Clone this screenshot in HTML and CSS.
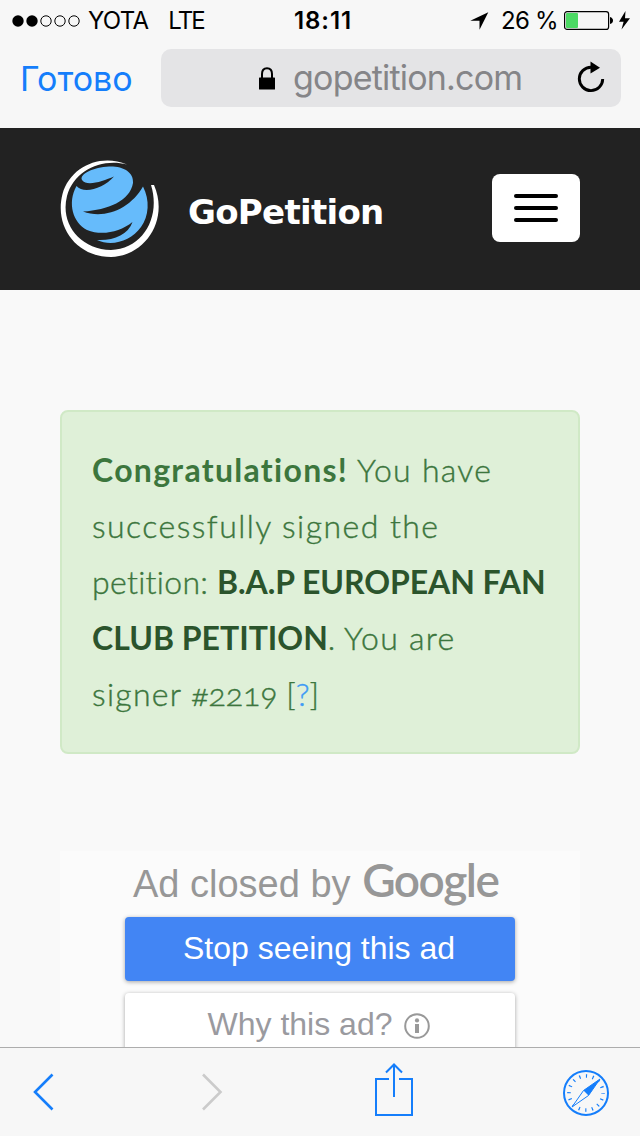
FILE: index.html
```
<!DOCTYPE html>
<html lang="ru">
<head>
  <meta charset="UTF-8" />
  <meta name="viewport" content="width=device-width, initial-scale=1.0"/>
  <title>GoPetition</title>
  <link rel="stylesheet" href="styles.css">
</head>
<body>
  <div class="status-bar">
    <div class="status-left">
      <svg class="signal" width="68" height="12" viewBox="0 0 68 12">
        <circle cx="6" cy="6" r="5.7"/>
        <circle cx="20" cy="6" r="5.7"/>
        <g fill="none" stroke="#000" stroke-width="1">
          <circle cx="34" cy="6" r="5.2"/>
          <circle cx="48" cy="6" r="5.2"/>
          <circle cx="62" cy="6" r="5.2"/>
        </g>
      </svg>
      <span class="carrier">YOTA</span>
      <span class="network">LTE</span>
    </div>
    <span class="time">18:11</span>
    <div class="status-right">
      <svg width="19" height="18" viewBox="0 0 19 18"><path d="M18.3 0.2L0.3 8.7H9.5V17.8Z"/></svg>
      <span class="percent">26 %</span>
      <svg class="battery" width="67" height="20" viewBox="0 0 67 20">
        <rect x="0.6" y="1.6" width="44" height="17.8" rx="2.5" fill="none" stroke="#000" stroke-width="1.2"/>
        <rect x="2" y="3" width="12" height="15" rx="1" fill="#4cd964"/>
        <path d="M46 7Q49 8 49 10.5T46 14Z"/>
        <path d="M61.5 1L55 11.8H59.6L57.5 19.5L66 8.3H61Z"/>
      </svg>
    </div>
  </div>

  <div class="address-bar">
    <a class="done">Готово</a>
    <div class="url-field">
      <svg class="lock" width="16" height="23" viewBox="0 0 16 23">
        <path d="M3 12V7Q3 1.2 8 1.2T13 7V12" fill="none" stroke="#000" stroke-width="2"/>
        <rect x="0" y="10.5" width="16" height="12" rx="0.6"/>
      </svg>
      <span class="url">gopetition.com</span>
      <svg class="reload" width="28" height="32" viewBox="0 0 28 32">
        <path d="M14 6.2A11.7 11.7 0 1 0 25.7 18" fill="none" stroke="#000" stroke-width="2.9"/>
        <path d="M13.5 0.5L23 6.8L13.5 12.5Z"/>
      </svg>
    </div>
  </div>

  <header class="site-header">
    <div class="brand">
      <svg width="100" height="100" viewBox="0 0 100 100">
        <path d="M67 5.5C40-6 10 8 2.5 35C-6 68 17 98 51 98C86 97 109 60 94 26L91 26C101 58 83 90 51 91C19 90 0 64 7 37C14 12 41-1 67 5.5Z" fill="#fff"/>
        <path d="M22 21C19 15 34 8 49 7.5C63 7 74 13 73 24C70 42 48 51 23 52.5C45 61 71 49 83 27.5C90 41 89 57 81 68C71 82 52 88 37 81C53 82 68 76 72.5 63C60 73 42 77 27 71C13 64 7 44 16.5 27C24 36 44 29 54 17.5C43 22 27 28 22 21Z" fill="#66bbfb"/>
      </svg>
      <span class="brand-name">GoPetition</span>
    </div>
    <button class="menu-button" type="button">
      <span></span>
      <span></span>
      <span></span>
    </button>
  </header>

  <main>
    <div class="alert">
      <div class="wide"><strong>Congratulations!</strong> You have</div>
      <div class="wider">successfully signed the</div>
      <div class="petition"><span>petition:</span> <b>B.A.P EUROPEAN FAN</b></div>
      <div><b>CLUB PETITION</b>. <span class="wide">You are</span></div>
      <div><span class="wide">signer</span> #2219 [<a>?</a>]</div>
    </div>

    <div class="ad">
      <div class="ad-title">Ad closed by <span class="google">Google</span></div>
      <div class="ad-button primary">Stop seeing this ad</div>
      <div class="ad-button">Why this ad?
        <svg width="26" height="26" viewBox="0 0 26 26">
          <circle cx="13" cy="13" r="11.8" fill="none" stroke="#999" stroke-width="2"/>
          <circle cx="13" cy="7.4" r="2.1" fill="#999"/>
          <rect x="11" y="11" width="4" height="9" fill="#999"/>
        </svg>
      </div>
    </div>
  </main>

  <footer class="toolbar">
    <svg class="back" width="22" height="38" viewBox="0 0 22 38"><path d="M20.5 1.5L3 19L20.5 36.5" fill="none" stroke="#157efb" stroke-width="2.6"/></svg>
    <svg class="forward" width="22" height="38" viewBox="0 0 22 38"><path d="M2 1.5L19.5 19L2 36.5" fill="none" stroke="#cbcbcb" stroke-width="2.6"/></svg>
    <svg class="share" width="38" height="54" viewBox="0 0 38 54">
      <g fill="none" stroke="#157efb" stroke-width="2">
        <path d="M14 16H1V52H37V16H24"/>
        <path d="M19 34V2M11 9.5L19 1.5L27 9.5"/>
      </g>
    </svg>
    <svg class="compass" width="46" height="46" viewBox="0 0 46 46">
      <circle cx="23" cy="23" r="22" fill="none" stroke="#157efb" stroke-width="2"/>
      <circle cx="23" cy="23" r="17" fill="none" stroke="#157efb" stroke-width="3.6" stroke-dasharray="1.2 5.476" stroke-dashoffset="0.6"/>
      <path d="M37 9L20.5 20.5L9 37L25.5 25.5Z" fill="#f7f7f7" stroke="#157efb" stroke-width="1"/>
      <path d="M37 9L20.5 20.5L25.5 25.5Z" fill="#157efb"/>
    </svg>
  </footer>
</body>
</html>
```

FILE: styles.css
```
* {
  box-sizing: border-box;
}
body {
  margin: 0;
  height: 1136px;
  display: flex;
  flex-direction: column;
  overflow: hidden;
  background-color: #f9f9f9;
  font-family: Inter, "Liberation Sans", sans-serif;
}
svg {
  display: block;
  flex: none;
}
.status-bar {
  height: 40px;
  flex: none;
  display: grid;
  grid-template-columns: 1fr auto 1fr;
  align-items: center;
  padding: 1px 9px 0 12px;
  background-color: #f7f7f7;
  font-size: 24px;
  line-height: 40px;
  white-space: nowrap;
}
.status-left, .status-right {
  display: flex;
  align-items: center;
}
.status-right {
  justify-content: flex-end;
}
.battery {
  margin-bottom: 2px;
}
.carrier {
  margin-left: 8px;
  letter-spacing: -0.7px;
}
.network {
  margin-left: 20px;
  letter-spacing: -1.9px;
}
.time {
  padding-left: 3px;
  font-weight: 600;
  letter-spacing: 0.9px;
}
.percent {
  margin: 0 6px 0 12px;
  letter-spacing: -0.7px;
}
.address-bar {
  height: 88px;
  flex: none;
  display: flex;
  align-items: flex-start;
  padding: 9px 19px 0 20px;
  background-color: #f7f7f7;
}
.done {
  width: 141px;
  font-size: 34px;
  line-height: 60px;
  color: #157efb;
}
.url-field {
  flex: 1;
  height: 58px;
  display: flex;
  align-items: center;
  padding: 0 16px 0 98px;
  border-radius: 10px;
  background-color: #e4e4e6;
}
.url {
  margin-left: 18px;
  font-size: 34px;
  line-height: 58px;
  letter-spacing: -0.8px;
  color: #858588;
}
.reload {
  margin: -3px 0 0 auto;
}
.site-header {
  height: 162px;
  flex: none;
  display: flex;
  align-items: center;
  justify-content: space-between;
  padding: 0 60px 2px;
  background-color: #222;
}
.brand {
  display: flex;
  align-items: center;
  padding-top: 2px;
}
.brand-name {
  margin: 6px 0 0 28px;
  font-family: "DejaVu Sans", sans-serif;
  font-size: 34px;
  font-weight: bold;
  line-height: 40px;
  letter-spacing: -0.7px;
  color: #fff;
}
.menu-button {
  width: 88px;
  height: 68px;
  display: flex;
  flex-direction: column;
  align-items: center;
  justify-content: center;
  gap: 8px;
  padding: 0;
  border: none;
  border-radius: 8px;
  background-color: #fff;
}
.menu-button span {
  width: 44px;
  height: 4px;
  border-radius: 2px;
  background-color: #000;
}
main {
  flex: 1;
  min-height: 0;
  overflow: hidden;
  padding: 120px 60px 0;
}
.alert {
  height: 344px;
  padding: 30px;
  border: 2px solid #d0e9c6;
  border-radius: 8px;
  background-color: #dff0d8;
  color: #3c763d;
  font-family: Lato, sans-serif;
  font-size: 32px;
  font-weight: 300;
  font-variant-ligatures: none;
  font-variant-numeric: oldstyle-nums;
  line-height: 56px;
  white-space: nowrap;
  -webkit-text-stroke: 0.4px;
}
.alert strong, .alert b {
  font-weight: 700;
  -webkit-text-stroke: 0;
}
.alert b {
  color: #2b542c;
}
.alert a {
  color: #3f9bf5;
}
.wide {
  letter-spacing: 1.3px;
}
.wider {
  letter-spacing: 1.45px;
}
.petition span {
  letter-spacing: 0.3px;
}
.petition b {
  letter-spacing: -0.05px;
}
.ad {
  height: 300px;
  margin-top: 97px;
  padding-top: 5px;
  background-color: #fbfbfb;
  font-family: "Liberation Sans", Arial, sans-serif;
}
.ad-title {
  height: 61px;
  padding-left: 73px;
  font-size: 38px;
  line-height: 52px;
  color: #979797;
  white-space: nowrap;
}
.google {
  margin-left: 1px;
  font-family: Lato, sans-serif;
  font-size: 46px;
  font-weight: 600;
  line-height: 48px;
  letter-spacing: -1.5px;
}
.ad-button {
  width: 390px;
  height: 64px;
  display: flex;
  align-items: center;
  justify-content: center;
  gap: 12px;
  margin: 0 auto 12px;
  padding: 0 2px 2px 0;
  border-radius: 4px;
  background-color: #fff;
  box-shadow: 0 1px 4px rgba(0, 0, 0, 0.35);
  font-size: 32px;
  color: #9a9a9f;
}
.ad-button svg {
  margin-top: 3px;
}
.ad-button.primary {
  background-color: #4285f4;
  color: #fff;
}
.toolbar {
  height: 89px;
  flex: none;
  display: flex;
  align-items: center;
  padding: 1px 31px 0 32px;
  border-top: 1px solid #adadad;
  background-color: #f7f7f7;
}
.back, .forward {
  margin-top: -1px;
}
.forward {
  margin-left: 147px;
}
.share {
  margin: -6px 0 0 152px;
}
.compass {
  margin-left: auto;
}
```
